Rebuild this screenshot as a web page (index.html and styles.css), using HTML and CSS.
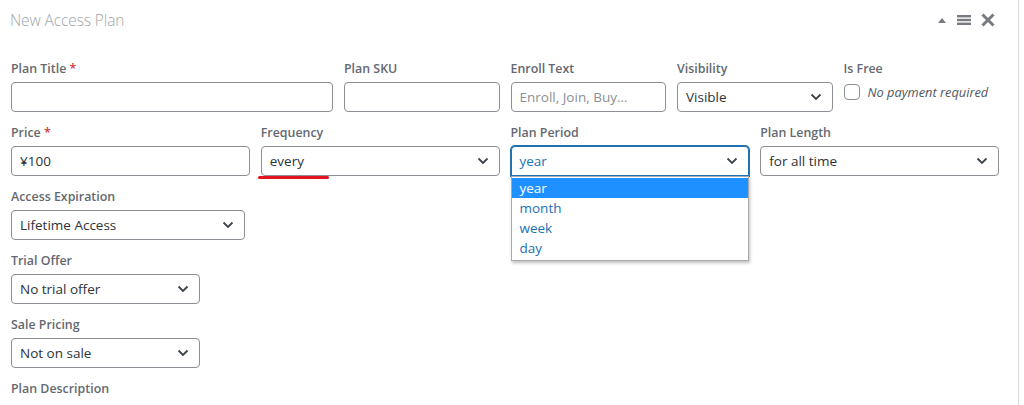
FILE: index.html
```html
<!DOCTYPE html>
<html lang="en">
<head>
<meta charset="utf-8">
<title>New Access Plan</title>
<link rel="stylesheet" href="styles.css">
</head>
<body>
<div class="panel">
  <div class="header">
    <h2 class="title">New Access Plan</h2>
    <div class="tools">
      <svg class="tool" width="10" height="10" viewBox="0 0 10 10"><path d="M1 8 L5 3 L9 8 Z" fill="#787c82"/></svg>
      <svg class="tool" width="16" height="14" viewBox="0 0 16 14"><rect x="1" y="2" width="14" height="2.4" fill="#787c82"/><rect x="1" y="5.8" width="14" height="2.4" fill="#787c82"/><rect x="1" y="9.6" width="14" height="2.4" fill="#787c82"/></svg>
      <svg class="tool" width="14" height="14" viewBox="0 0 14 14"><path d="M2.5 2.5 L11.5 11.5 M11.5 2.5 L2.5 11.5" stroke="#787c82" stroke-width="3" stroke-linecap="square"/></svg>
    </div>
  </div>

  <div class="form">
    <div class="row row-six">
      <div class="field span2">
        <div class="label">Plan Title <span class="req">*</span></div>
        <div class="input"></div>
      </div>
      <div class="field">
        <div class="label">Plan SKU</div>
        <div class="input"></div>
      </div>
      <div class="field">
        <div class="label">Enroll Text</div>
        <div class="input placeholder">Enroll, Join, Buy...</div>
      </div>
      <div class="field">
        <div class="label">Visibility</div>
        <div class="input select"><span>Visible</span><svg class="chev" width="12" height="8" viewBox="0 0 12 8"><path d="M1.5 1.5 L6 6 L10.5 1.5" fill="none" stroke="#3c434a" stroke-width="1.8"/></svg></div>
      </div>
      <div class="field">
        <div class="label">Is Free</div>
        <div class="check-row"><span class="checkbox"></span><em>No payment required</em></div>
      </div>
    </div>

    <div class="row row-four">
      <div class="field">
        <div class="label">Price <span class="req">*</span></div>
        <div class="input">¥100</div>
      </div>
      <div class="field">
        <div class="label">Frequency</div>
        <div class="input select"><span>every</span><svg class="chev" width="12" height="8" viewBox="0 0 12 8"><path d="M1.5 1.5 L6 6 L10.5 1.5" fill="none" stroke="#3c434a" stroke-width="1.8"/></svg></div>
        <div class="mark"></div>
      </div>
      <div class="field">
        <div class="label">Plan Period</div>
        <div class="input select focus"><span>year</span><svg class="chev" width="12" height="8" viewBox="0 0 12 8"><path d="M1.5 1.5 L6 6 L10.5 1.5" fill="none" stroke="#3c434a" stroke-width="1.8"/></svg></div>
        <ul class="listbox">
          <li class="active">year</li>
          <li>month</li>
          <li>week</li>
          <li>day</li>
        </ul>
      </div>
      <div class="field">
        <div class="label">Plan Length</div>
        <div class="input select"><span>for all time</span><svg class="chev" width="12" height="8" viewBox="0 0 12 8"><path d="M1.5 1.5 L6 6 L10.5 1.5" fill="none" stroke="#3c434a" stroke-width="1.8"/></svg></div>
      </div>
    </div>

    <div class="row">
      <div class="field w-expire">
        <div class="label">Access Expiration</div>
        <div class="input select"><span>Lifetime Access</span><svg class="chev" width="12" height="8" viewBox="0 0 12 8"><path d="M1.5 1.5 L6 6 L10.5 1.5" fill="none" stroke="#3c434a" stroke-width="1.8"/></svg></div>
      </div>
    </div>

    <div class="row">
      <div class="field w-small">
        <div class="label">Trial Offer</div>
        <div class="input select"><span>No trial offer</span><svg class="chev" width="12" height="8" viewBox="0 0 12 8"><path d="M1.5 1.5 L6 6 L10.5 1.5" fill="none" stroke="#3c434a" stroke-width="1.8"/></svg></div>
      </div>
    </div>

    <div class="row">
      <div class="field w-small">
        <div class="label">Sale Pricing</div>
        <div class="input select"><span>Not on sale</span><svg class="chev" width="12" height="8" viewBox="0 0 12 8"><path d="M1.5 1.5 L6 6 L10.5 1.5" fill="none" stroke="#3c434a" stroke-width="1.8"/></svg></div>
      </div>
    </div>

    <div class="row">
      <div class="field">
        <div class="label">Plan Description</div>
      </div>
    </div>
  </div>
</div>
</body>
</html>
```

FILE: styles.css
```css
html, body {
  margin: 0;
  padding: 0;
  background: #ffffff;
}

body {
  font-family: "Open Sans", "Noto Sans", "Liberation Sans", sans-serif;
  color: #2c3338;
  overflow: hidden;
}

.panel {
  width: 1019px;
  height: 405px;
  box-sizing: border-box;
  border-right: 1px solid #dcdcde;
  overflow: hidden;
}

.header {
  height: 40px;
  display: flex;
  align-items: center;
  justify-content: space-between;
  padding: 0 23px 0 10px;
}

.title {
  margin: 0;
  font-size: 15.5px;
  font-weight: 300;
  color: #a0a5aa;
  letter-spacing: -0.1px;
}

.tools {
  display: flex;
  align-items: center;
  gap: 9px;
}

.tool {
  display: block;
}

.form {
  padding: 20px 0 0 11px;
  width: 988px;
}

.row {
  margin-bottom: 12px;
}

.row-six {
  display: grid;
  grid-template-columns: repeat(6, 1fr);
  column-gap: 11px;
}

.row-four {
  display: grid;
  grid-template-columns: repeat(4, 1fr);
  column-gap: 11px;
}

.span2 {
  grid-column: span 2;
}

.field {
  position: relative;
}

.w-expire {
  width: 234px;
}

.w-small {
  width: 189px;
}

.label {
  font-size: 12.4px;
  font-weight: 600;
  line-height: 18px;
  color: #646970;
  margin-bottom: 4px;
  white-space: nowrap;
}

.req {
  color: #d63638;
}

.input {
  height: 30px;
  box-sizing: border-box;
  border: 1px solid #8c8f94;
  border-radius: 4px;
  padding: 0 8px;
  font-size: 13.5px;
  line-height: 28px;
  color: #2c3338;
  background: #fff;
  white-space: nowrap;
  overflow: hidden;
}

.placeholder {
  color: #8c8f94;
}

.select {
  display: flex;
  align-items: center;
  justify-content: space-between;
  padding-right: 10px;
}

.chev {
  display: block;
  flex: none;
}

.focus {
  border-color: #2271b1;
  box-shadow: 0 0 0 1px #2271b1;
  color: #2271b1;
  border-bottom-left-radius: 0;
  border-bottom-right-radius: 0;
}

.check-row {
  display: flex;
  align-items: center;
  gap: 8px;
  height: 20px;
  margin-top: 1px;
  font-size: 12.8px;
  color: #50575e;
}

.checkbox {
  width: 16px;
  height: 16px;
  box-sizing: border-box;
  border: 1px solid #8c8f94;
  border-radius: 4px;
  background: #fff;
  flex: none;
}

.mark {
  position: absolute;
  left: -3px;
  bottom: -3px;
  width: 71px;
  height: 3px;
  border-radius: 2px;
  background: #e3141f;
}

.listbox {
  position: absolute;
  left: 0;
  right: 0;
  top: 52px;
  margin: 0;
  padding: 1px 0 2px;
  list-style: none;
  background: #fff;
  border: 1px solid #a7aaad;
  box-shadow: 1px 2px 3px rgba(0, 0, 0, 0.25);
  z-index: 5;
}

.listbox li {
  font-size: 13.5px;
  line-height: 20px;
  padding: 0 8px;
  color: #2271b1;
}

.listbox li.active {
  background: #1e90ff;
  color: #ffffff;
}
```
